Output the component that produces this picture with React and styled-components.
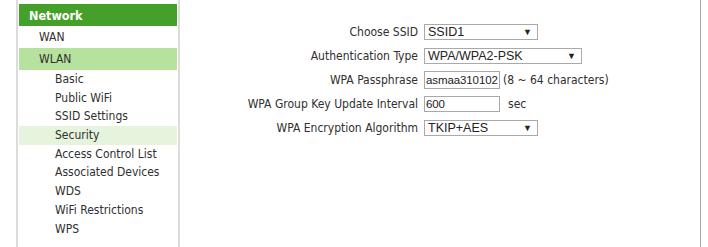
import React from 'react';
import styled, { createGlobalStyle } from 'styled-components';

const GlobalStyle = createGlobalStyle`
  html, body {
    margin: 0;
    padding: 0;
    background: #fff;
  }
  body {
    font-family: "DejaVu Sans Condensed", "DejaVu Sans", sans-serif;
    font-size: 12px;
    color: #303030;
  }
`;

const Page = styled.div`
  display: flex;
  height: 247px;
  padding-left: 16px;
  overflow: hidden;
`;

const Sidebar = styled.div`
  flex-shrink: 0;
  border-left: 2px solid #dcdcdc;
  border-right: 2px solid #dcdcdc;
  padding: 4px 1px 0 1px;
  box-sizing: content-box;
  width: 158px;
`;

const MenuHeader = styled.div`
  height: 22px;
  line-height: 23px;
  background: #45a02a;
  color: #fff;
  font-weight: bold;
  font-size: 12.5px;
  padding-left: 10px;
`;

const MenuItem = styled.div`
  height: 22px;
  line-height: 23px;
  padding-left: 20px;
  background: ${({ $active }) => ($active ? '#b6e29e' : 'transparent')};
`;

const SubItem = styled.div`
  height: 18.7px;
  line-height: 19px;
  padding-left: 36px;
  white-space: nowrap;
  background: ${({ $active }) => ($active ? '#e6f3dd' : 'transparent')};
`;

const Main = styled.div`
  width: 520px;
  flex-shrink: 0;
  border-right: 1px solid #a8a8a8;
  padding-top: 20px;
`;

const Form = styled.div`
  display: grid;
  grid-template-columns: 238px auto;
  column-gap: 6px;
`;

const Label = styled.div`
  height: 24px;
  display: flex;
  align-items: center;
  justify-content: flex-end;
  white-space: nowrap;
`;

const Field = styled.div`
  height: 24px;
  display: flex;
  align-items: center;
  gap: 3px;
`;

const SelectBox = styled.div`
  box-sizing: border-box;
  width: ${({ $w }) => $w}px;
  height: 16px;
  border: 1px solid #a9a9a9;
  display: flex;
  align-items: center;
  justify-content: space-between;
  padding: 0 5px 0 3px;
  font-family: "Liberation Sans", Arial, sans-serif;
  font-size: 12.5px;
  color: #222;
`;

const Arrow = styled.span`
  font-size: 9px;
  color: #222;
`;

const TextInput = styled.div`
  box-sizing: border-box;
  width: ${({ $w }) => $w}px;
  height: ${({ $h }) => $h}px;
  border: 1px solid #a9a9a9;
  display: flex;
  align-items: center;
  padding: 0 0 0 1px;
  font-family: "Liberation Sans", Arial, sans-serif;
  font-size: 11.5px;
  letter-spacing: -0.1px;
  color: #222;
  white-space: nowrap;
  overflow: hidden;
`;

const Hint = styled.span`
  margin-left: ${({ $ml }) => $ml || 0}px;
`;

const subItems = [
  'Basic',
  'Public WiFi',
  'SSID Settings',
  'Security',
  'Access Control List',
  'Associated Devices',
  'WDS',
  'WiFi Restrictions',
  'WPS'
];

export default function App() {
  return (
    <>
      <GlobalStyle />
      <Page>
        <Sidebar>
          <MenuHeader>Network</MenuHeader>
          <MenuItem>WAN</MenuItem>
          <MenuItem $active>WLAN</MenuItem>
          {subItems.map((s) => (
            <SubItem key={s} $active={s === 'Security'}>{s}</SubItem>
          ))}
        </Sidebar>
        <Main>
          <Form>
            <Label>Choose SSID</Label>
            <Field>
              <SelectBox $w={114}>SSID1<Arrow>▼</Arrow></SelectBox>
            </Field>

            <Label>Authentication Type</Label>
            <Field>
              <SelectBox $w={158}>WPA/WPA2-PSK<Arrow>▼</Arrow></SelectBox>
            </Field>

            <Label>WPA Passphrase</Label>
            <Field>
              <TextInput $w={76} $h={18}>asmaa310102</TextInput>
              <Hint>(8 ~ 64 characters)</Hint>
            </Field>

            <Label>WPA Group Key Update Interval</Label>
            <Field>
              <TextInput $w={76} $h={16}>600</TextInput>
              <Hint $ml={5}>sec</Hint>
            </Field>

            <Label>WPA Encryption Algorithm</Label>
            <Field>
              <SelectBox $w={114}>TKIP+AES<Arrow>▼</Arrow></SelectBox>
            </Field>
          </Form>
        </Main>
      </Page>
    </>
  );
}
